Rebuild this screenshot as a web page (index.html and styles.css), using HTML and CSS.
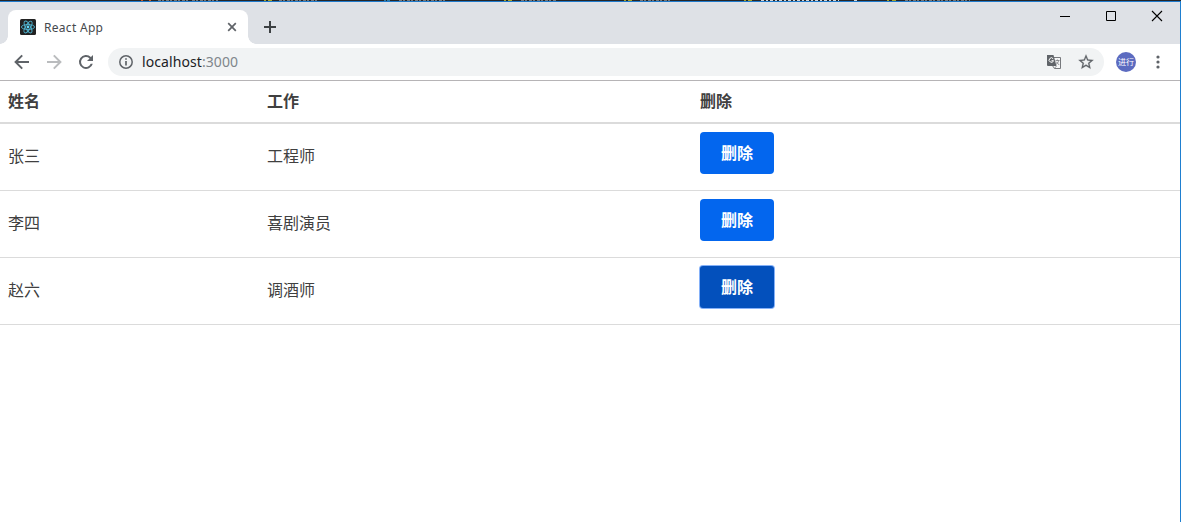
FILE: index.html
```html
<!DOCTYPE html>
<html lang="zh-CN">
<head>
<meta charset="utf-8">
<title>React App</title>
<link rel="stylesheet" href="styles.css">
</head>
<body>
<svg class="backdrop" width="1181" height="1" viewBox="0 0 1181 1" shape-rendering="crispEdges">
  <rect width="1181" height="1" fill="#252628"/>
  <path d="M141 .5h2M149 .5h2" stroke="#c75c25"/>
  <path d="M264 .5h2M268 .5h4M504 .5h2M508 .5h4M624 .5h2M628 .5h4M744 .5h2M748 .5h4M887 .5h2M892 .5h4" stroke="#a6a52c"/>
  <path d="M384 .5h2M387 .5h3" stroke="#307ba3"/>
  <path d="M158 .5h30M192 .5h26M279 .5h40M399 .5h47M521 .5h36M640 .5h31M905 .5h65" stroke="#77797b" stroke-dasharray="3 1 2 2"/>
  <path d="M761 .5h78M854 .5h4" stroke="#d5d6d7" stroke-dasharray="3 2 2 2"/>
</svg>
<div class="window">
  <header class="titlebar">
    <div class="tab">
      <svg class="favicon" width="16" height="16" viewBox="0 0 16 16">
        <rect width="16" height="16" rx="1.500" fill="#222"/>
        <g fill="none" stroke="#4fb3cf" stroke-width=".9">
          <ellipse cx="8" cy="8" rx="6.6" ry="2.5"/>
          <ellipse cx="8" cy="8" rx="6.6" ry="2.5" transform="rotate(60 8 8)"/>
          <ellipse cx="8" cy="8" rx="6.6" ry="2.5" transform="rotate(120 8 8)"/>
        </g>
        <circle cx="8" cy="8" r="1.4" fill="#61dafb"/>
      </svg>
      <span class="tab-title">React App</span>
      <svg class="tab-close" width="10" height="10" viewBox="0 0 10 10"><path d="M1.2 1.2l7.6 7.6M8.8 1.2L1.2 8.8" stroke="#5f6368" stroke-width="1.7"/></svg>
    </div>
    <svg class="new-tab" width="12" height="12" viewBox="0 0 12 12"><path d="M6 0v12M0 6h12" stroke="#3c4043" stroke-width="2"/></svg>
    <div class="window-controls">
      <svg width="46" height="28" viewBox="0 0 46 28"><path d="M17 14.500h10" stroke="#000"/></svg>
      <svg width="46" height="28" viewBox="0 0 46 28"><path d="M17.500 9.500h9v9h-9z" fill="none" stroke="#000"/></svg>
      <svg width="46" height="28" viewBox="0 0 46 28"><path d="M17 9l10 10M27 9L17 19" stroke="#000" stroke-width="1.1"/></svg>
    </div>
  </header>
  <div class="toolbar">
    <svg width="28" height="28" viewBox="0 0 28 28"><path d="M21 14H8M14.200 7.400L7.600 14l6.600 6.600" fill="none" stroke="#5f6368" stroke-width="2"/></svg>
    <svg width="28" height="28" viewBox="0 0 28 28"><path d="M7 14h13M13.800 7.400L20.400 14l-6.600 6.600" fill="none" stroke="#babcbe" stroke-width="2"/></svg>
    <svg width="28" height="28" viewBox="-6 -6 28 28"><path fill="#5f6368" d="M12.950 3.050A7 7 0 1 0 14.780 9.750H12.700A5 5 0 1 1 11.530 4.470L9 7h6V1z"/></svg>
    <div class="address">
      <svg width="14" height="14" viewBox="0 0 14 14"><circle cx="7" cy="7" r="6.200" fill="none" stroke="#5f6368" stroke-width="1.500"/><path d="M7 3.200v1.600M7 6v4.500" stroke="#5f6368" stroke-width="1.700"/></svg>
      <span class="url">localhost<span class="port">:3000</span></span>
      <svg class="translate" width="14" height="14" viewBox="0 0 14 14">
        <path d="M5 2.500h8.500v11H7.500L5 10z" fill="#f4f5f6" stroke="#77797d"/>
        <path d="M0 0h6.500l3 11H1a1 1 0 0 1-1-1z" fill="#5f6368"/>
        <path d="M6.200 3.800A2.200 2.200 0 1 0 6.500 5.700H4.500" fill="none" stroke="#fff" stroke-width="1"/>
        <path d="M8.500 5.500h4M10.400 4.500v1M11.700 5.500c-.5 2-1.500 3-2.700 4M9.200 6.700l3 3.300M9.500 11l-2 2.300" fill="none" stroke="#77797d" stroke-width=".8"/>
      </svg>
      <svg class="star" width="18" height="18" viewBox="0 0 24 24"><path fill="#5f6368" stroke="#5f6368" stroke-width=".3" d="M22 9.240l-7.190-.62L12 2 9.190 8.630 2 9.240l5.460 4.730L5.820 21 12 17.270 18.180 21l-1.630-7.030L22 9.240zM12 15.400l-3.760 2.270 1-4.280-3.320-2.880 4.380-.38L12 6.100l1.710 4.040 4.380.38-3.320 2.880 1 4.280L12 15.400z"/></svg>
    </div>
    <div class="avatar">进行</div>
    <svg class="menu" width="4" height="14" viewBox="0 0 4 14" fill="#5f6368"><circle cx="2" cy="2" r="1.600"/><circle cx="2" cy="7" r="1.600"/><circle cx="2" cy="12" r="1.600"/></svg>
  </div>
  <table class="people">
    <colgroup><col class="col-name"><col class="col-job"><col></colgroup>
    <thead><tr><th>姓名</th><th>工作</th><th>删除</th></tr></thead>
    <tbody>
      <tr><td>张三</td><td>工程师</td><td><button class="button">删除</button></td></tr>
      <tr><td>李四</td><td>喜剧演员</td><td><button class="button">删除</button></td></tr>
      <tr><td>赵六</td><td>调酒师</td><td><button class="button focused">删除</button></td></tr>
    </tbody>
  </table>
</div>
</body>
</html>
```
FILE: styles.css
```css
* { box-sizing: border-box; }
body {
  margin: 0;
  height: 522px;
  overflow: hidden;
  background: #fff;
  color: #404040;
  font: 16px "Noto Sans", "Noto Sans CJK SC", sans-serif;
}
svg { display: block; flex: none; }
.window {
  height: 521px;
  border-top: 1px solid #1f7acb;
  border-right: 1px solid #1f7fd0;
}
.titlebar {
  display: flex;
  height: 42px;
  background: #dee1e6;
}
.tab {
  position: relative;
  display: flex;
  align-items: center;
  width: 240px;
  height: 34px;
  margin: 8px 0 0 8px;
  padding: 0 11px 0 12px;
  background: #fff;
  border-radius: 8px 8px 0 0;
}
.tab::before, .tab::after {
  content: "";
  position: absolute;
  bottom: 0;
  width: 8px;
  height: 8px;
}
.tab::before { left: -8px; background: radial-gradient(circle at 0 0, transparent 7.5px, #fff 8px); }
.tab::after { right: -8px; background: radial-gradient(circle at 100% 0, transparent 7.5px, #fff 8px); }
.tab-title {
  flex: 1;
  margin-left: 8px;
  font-size: 12px;
  letter-spacing: .3px;
  color: #45494d;
}
.new-tab { margin: 19px 0 0 16px; }
.window-controls { display: flex; margin: 0 -1px 0 auto; }
.toolbar {
  display: flex;
  align-items: center;
  gap: 4px;
  height: 37px;
  padding: 0 20px 1px 8px;
  border-bottom: 1px solid #b6b4b6;
}
.address {
  display: flex;
  align-items: center;
  flex: 1;
  height: 28px;
  margin-left: 4px;
  padding: 0 9px 0 11px;
  border-radius: 14px;
  background: #f1f3f4;
}
.url {
  flex: 1;
  margin-left: 9px;
  font-size: 14px;
  letter-spacing: .08px;
  color: #202124;
}
.port { color: #80868b; }
.star { margin-left: 16px; }
.avatar {
  width: 20px;
  height: 20px;
  margin: 0 16px 0 8px;
  border-radius: 50%;
  background: #5c6bc0;
  color: #fff;
  font: 8px/20px "Noto Sans CJK SC", sans-serif;
  text-align: center;
}
.people {
  width: 100%;
  table-layout: fixed;
  border-spacing: 0;
  line-height: 24px;
}
.col-name { width: 259px; }
.col-job { width: 433px; }
.people th {
  height: 43px;
  padding: 7px 8px 9px;
  border-bottom: 2px solid #dbdbdb;
  text-align: left;
  font-weight: 700;
}
.people td {
  height: 67px;
  padding: 0 8px 2px;
  border-bottom: 1px solid #dbdbdb;
  vertical-align: middle;
}
.button {
  display: block;
  width: 74px;
  height: 42px;
  margin: 2px 0 8px;
  padding: 0 0 2px;
  border: 0;
  border-radius: 4px;
  background: #0366ee;
  color: #fff;
  font: 700 16px/40px "Noto Sans CJK SC", sans-serif;
}
.button.focused {
  border-radius: 3px;
  background: #0350bc;
  box-shadow: 0 0 0 1px #85b1f8;
}
```
